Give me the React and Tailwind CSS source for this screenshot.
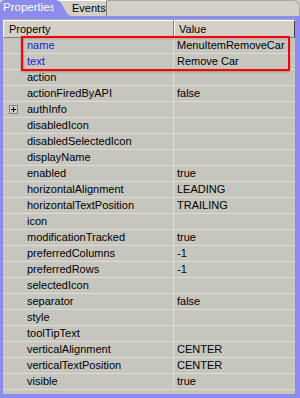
import React from "react";

const rows = [
  ["name", "MenuItemRemoveCar", true],
  ["text", "Remove Car", true],
  ["action", ""],
  ["actionFiredByAPI", "false"],
  ["authInfo", "", false, true],
  ["disabledIcon", ""],
  ["disabledSelectedIcon", ""],
  ["displayName", ""],
  ["enabled", "true"],
  ["horizontalAlignment", "LEADING"],
  ["horizontalTextPosition", "TRAILING"],
  ["icon", ""],
  ["modificationTracked", "true"],
  ["preferredColumns", "-1"],
  ["preferredRows", "-1"],
  ["selectedIcon", ""],
  ["separator", "false"],
  ["style", ""],
  ["toolTipText", ""],
  ["verticalAlignment", "CENTER"],
  ["verticalTextPosition", "CENTER"],
  ["visible", "true"],
];

function Expander() {
  return (
    <div className="w-[9px] h-[9px] border border-[#7f7f7f] bg-[#d4d0c8] flex items-center justify-center">
      <svg width="7" height="7" viewBox="0 0 7 7">
        <path d="M1 3.5h5M3.5 1v5" stroke="#000" strokeWidth="1" />
      </svg>
    </div>
  );
}

function Row({ name, value, blue, expand }) {
  return (
    <div className="flex h-[16px] border-b border-[#deddd5]">
      <div className="w-[24px] flex items-center pl-[6px]">
        {expand && <Expander />}
      </div>
      <div
        className={
          "w-[147px] border-r border-[#deddd5] flex items-center leading-none " +
          (blue ? "text-[#1a1ad8]" : "text-black")
        }
      >
        {name}
      </div>
      <div className="flex-1 flex items-center pl-[3px] leading-none text-black">
        {value}
      </div>
    </div>
  );
}

export default function App() {
  return (
    <div
      className="relative w-[300px] h-[398px] bg-[#8c8cf0] flex flex-col text-[11px] select-none"
      style={{ fontFamily: '"Liberation Sans", Arial, sans-serif' }}
    >
      {/* tab strip */}
      <div className="h-[16px] flex bg-[#d4d0c8]">
        <div className="h-full w-[54px] shrink-0 bg-[#8c8cf0] rounded-tl-[5px] pl-[3px] flex items-center text-white text-[11.5px] leading-none">
          Properties
        </div>
        <svg width="18" height="16" viewBox="0 0 18 16" className="shrink-0 -mr-[14px] relative z-10">
          <path d="M0 0 H1 C6 0 8 4 10 8 C12 12 14 16 18 16 H0 Z" fill="#8c8cf0" />
        </svg>
        <div className="h-full w-[49px] shrink-0 border-t border-r border-[#808080] border-t-white pl-[14px] flex items-center text-black leading-none">
          Events
        </div>
        <div className="flex-1 h-full border-t border-r border-[#a8a8a8] rounded-tr-[6px]" />
      </div>

      {/* sheet */}
      <div className="mt-[3px] ml-[3px] mr-[5px] mb-[4px] flex-1 bg-[#c6c6be] flex flex-col">
        <div className="h-[19px] flex bg-[#d4d0c8] border-t border-[#a8a8a8]">
          <div className="w-[171px] border-t border-l border-white border-b border-r border-b-[#808080] border-r-[#808080] flex items-center pl-[5px] leading-none text-black">
            Property
          </div>
          <div className="flex-1 border-t border-l border-white border-b border-r border-b-[#808080] border-r-[#404040] flex items-center pl-[4px] leading-none text-black">
            Value
          </div>
        </div>
        {rows.map((r) => (
          <Row key={r[0]} name={r[0]} value={r[1]} blue={r[2]} expand={r[3]} />
        ))}
      </div>

      {/* highlight box */}
      <div className="absolute left-[21px] top-[36px] w-[269px] h-[35px] border-2 border-[#ff0000] shadow-[0_1px_2px_rgba(0,0,0,0.25),inset_1px_1px_2px_rgba(0,0,0,0.15)]" />
    </div>
  );
}
